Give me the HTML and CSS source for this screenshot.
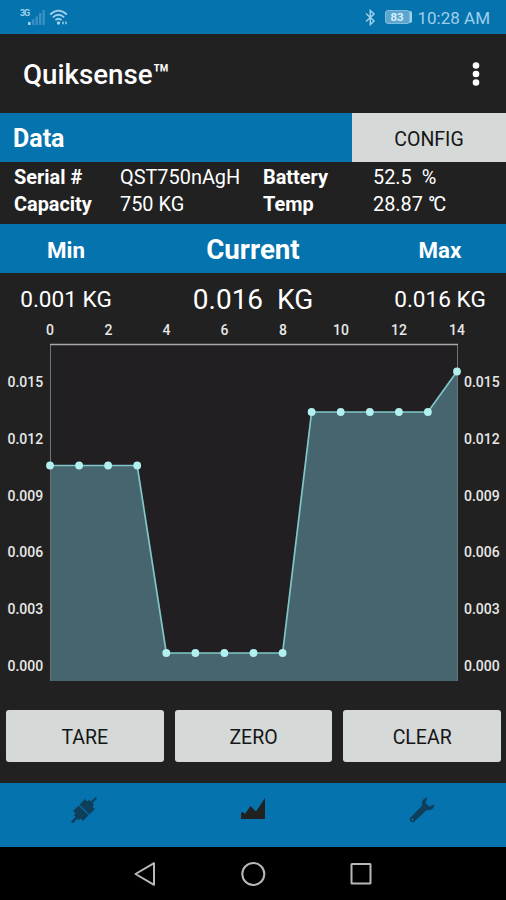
FILE: index.html
```html
<!DOCTYPE html>
<html lang="en">
<head>
    <meta charset="UTF-8">
    <meta name="viewport" content="width=device-width, initial-scale=1.0">
    <title>Quiksense</title>
    <link rel="stylesheet" href="styles.css">
</head>
<body>
    <div class="phone">
        <!-- Status bar -->
        <div class="status-bar">
            <div class="status-left">
                <span class="network">3G</span>
                <svg class="signal" width="18" height="16" viewBox="0 0 18 16">
                    <rect class="on" x="0" y="13" width="2.6" height="3"/>
                    <rect x="4" y="10.5" width="2.4" height="5.5"/>
                    <rect x="7.5" y="7.5" width="2.4" height="8.5"/>
                    <rect x="11" y="4" width="2.4" height="12"/>
                    <rect x="14.5" y="1" width="2.4" height="15"/>
                </svg>
                <svg class="wifi" width="20" height="17" viewBox="0 0 20 17">
                    <path d="M1.2 5.5Q9.5 -2.2 17.8 5.5"/>
                    <path d="M3.8 8.4Q9.5 3.2 15.2 8.4"/>
                    <path d="M6.4 11.2Q9.5 8.4 12.6 11.2"/>
                    <circle cx="9.5" cy="14" r="1.7"/>
                    <path class="thin" d="M14 12.5v2.8M17 12.5v2.8"/>
                </svg>
            </div>
            <div class="status-right">
                <svg class="bluetooth" width="11" height="17" viewBox="0 0 11 17">
                    <path d="M1 4.5L9 12L5.3 15.5V1.5L9 5L1 12.5"/>
                </svg>
                <div class="battery"><span>83</span></div>
                <span class="clock">10:28 AM</span>
            </div>
        </div>

        <div class="app-bar">
            <h1 class="title">Quiksense™</h1>
            <svg class="more" width="10" height="26" viewBox="0 0 10 26">
                <circle cx="5" cy="4.5" r="3.3"/>
                <circle cx="5" cy="13" r="3.3"/>
                <circle cx="5" cy="21.5" r="3.3"/>
            </svg>
        </div>

        <!-- Device data -->
        <div class="data-bar">
            <h2 class="data-title">Data</h2>
            <button class="config">CONFIG</button>
        </div>
        <div class="info">
            <span class="label">Serial #</span>
            <span>QST750nAgH</span>
            <span class="label">Battery</span>
            <span>52.5&nbsp; %</span>
            <span class="label">Capacity</span>
            <span>750 KG</span>
            <span class="label">Temp</span>
            <span>28.87 <span class="degree">°</span>C</span>
        </div>

        <!-- Readings -->
        <div class="readings readings-head">
            <span>Min</span>
            <span class="current">Current</span>
            <span>Max</span>
        </div>
        <div class="readings readings-values">
            <span>0.001 KG</span>
            <span class="current">0.016&nbsp; KG</span>
            <span>0.016 KG</span>
        </div>

        <svg class="chart" width="506" height="383" viewBox="0 318 506 383">
            <rect class="plot" x="50" y="344" width="407" height="337"/>
            <path class="area" d="M50 465.5H137.2L166.3 653H282.6L311.6 412H427.9L457 371.5V681H50Z"/>
            <path class="side" d="M50.5 344V681M457.5 344V681"/>
            <path class="top" d="M50 344.5H458"/>
            <path class="line" d="M50 465.5H137.2L166.3 653H282.6L311.6 412H427.9L457 371.5"/>
            <g class="points">
                <circle cx="50" cy="465.5" r="3.9"/>
                <circle cx="79.1" cy="465.5" r="3.9"/>
                <circle cx="108.1" cy="465.5" r="3.9"/>
                <circle cx="137.2" cy="465.5" r="3.9"/>
                <circle cx="166.3" cy="653" r="3.9"/>
                <circle cx="195.4" cy="653" r="3.9"/>
                <circle cx="224.4" cy="653" r="3.9"/>
                <circle cx="253.5" cy="653" r="3.9"/>
                <circle cx="282.6" cy="653" r="3.9"/>
                <circle cx="311.6" cy="412" r="3.9"/>
                <circle cx="340.7" cy="412" r="3.9"/>
                <circle cx="369.8" cy="412" r="3.9"/>
                <circle cx="398.9" cy="412" r="3.9"/>
                <circle cx="427.9" cy="412" r="3.9"/>
                <circle cx="457" cy="371.5" r="3.9"/>
            </g>
            <g class="axis-x">
                <text x="50" y="335">0</text>
                <text x="108.5" y="335">2</text>
                <text x="166.5" y="335">4</text>
                <text x="224.5" y="335">6</text>
                <text x="283" y="335">8</text>
                <text x="341" y="335">10</text>
                <text x="399" y="335">12</text>
                <text x="457" y="335">14</text>
            </g>
            <g class="axis-y">
                <text x="7.5" y="386.5">0.015</text>
                <text x="7.5" y="443.5">0.012</text>
                <text x="7.5" y="500.5">0.009</text>
                <text x="7.5" y="557">0.006</text>
                <text x="7.5" y="613.5">0.003</text>
                <text x="7.5" y="670.5">0.000</text>
                <text x="464" y="386.5">0.015</text>
                <text x="464" y="443.5">0.012</text>
                <text x="464" y="500.5">0.009</text>
                <text x="464" y="557">0.006</text>
                <text x="464" y="613.5">0.003</text>
                <text x="464" y="670.5">0.000</text>
            </g>
        </svg>

        <div class="actions">
            <button>TARE</button>
            <button>ZERO</button>
            <button>CLEAR</button>
        </div>

        <!-- Tabs -->
        <div class="tabs">
            <div class="tab">
                <svg width="26" height="26" viewBox="0 0 26 26">
                    <g transform="rotate(-45 13 13)">
                        <path d="M-4.5 12H2V9.5H4.5V6H12.4V20H4.5V16.5H2V14.5H-4.5Z"/>
                        <path d="M13.6 6H21.5V9.5H24V12H30.5V14H24V16.5H21.5V20H13.6Z"/>
                    </g>
                </svg>
            </div>
            <div class="tab active">
                <svg width="26" height="26" viewBox="0 0 26 26">
                    <path d="M1 22V16L3 15L5 17L10.5 9L16 14.5L25 1V22Z"/>
                </svg>
            </div>
            <div class="tab">
                <svg width="26" height="26" viewBox="0 0 26 26">
                    <path fill-rule="evenodd" d="M18.4 .6L16.6 5.8L20.2 9.4L25.3 7.6C25.6 10.6 22.4 14.2 17.8 12.9L5.2 24.7C2.6 26.8 -.8 23.4 1.3 20.8L13 8.8C11.9 4.5 14.8 .7 18.4 .6ZM3.5 21.6A1 1 0 1 0 3.5 23.6A1 1 0 1 0 3.5 21.6Z"/>
                </svg>
            </div>
        </div>

        <!-- System navigation -->
        <div class="nav-bar">
            <svg width="26" height="28" viewBox="0 0 26 28">
                <path d="M3.5 14L22 3.2V24.8Z"/>
            </svg>
            <svg width="28" height="28" viewBox="0 0 28 28">
                <circle cx="14.3" cy="14" r="11"/>
            </svg>
            <svg width="26" height="28" viewBox="0 0 26 28">
                <rect x="3.5" y="4" width="19" height="19.5" rx=".5"/>
            </svg>
        </div>
    </div>
</body>
</html>
```

FILE: styles.css
```css
* {
    box-sizing: border-box;
}

body {
    margin: 0;
    background-color: #212121;
    color: #fff;
    font-family: Roboto, "Noto Sans", sans-serif;
}

.phone {
    width: 506px;
    height: 900px;
    display: flex;
    flex-direction: column;
    overflow: hidden;
    background-color: #212121;
}

h1, h2 {
    margin: 0;
}

button {
    border: none;
    padding: 2px 0 0;
    background-color: #d5d9d8;
    color: #161616;
    font-family: inherit;
    font-size: 19.5px;
}

/* Status bar */
.status-bar {
    height: 34px;
    flex: none;
    display: flex;
    justify-content: space-between;
    padding: 0 16px 0 20px;
    background-color: #0573ae;
    color: #9fd0ea;
}

.status-left,
.status-right {
    display: flex;
    align-items: center;
}

.network {
    width: 8px;
    align-self: flex-start;
    margin-top: 8px;
    font-size: 9px;
    font-weight: 700;
    line-height: 10px;
    letter-spacing: -1.2px;
}

.signal {
    fill: #3791c4;
}

.signal .on {
    fill: #9fd0ea;
}

.wifi {
    margin-left: 3px;
    fill: #9fd0ea;
}

.wifi path {
    fill: none;
    stroke: #9fd0ea;
    stroke-width: 1.8;
}

.wifi .thin {
    stroke-width: 1.4;
}

.bluetooth {
    fill: none;
    stroke: #9fd0ea;
    stroke-width: 1.5;
}

.battery {
    width: 25px;
    height: 14px;
    margin: 0 8px 0 9px;
    border: 1px solid #7fbbdc;
    border-radius: 3px;
    background-color: #5ba6d0;
    box-shadow: 3px 0 0 -1px #9fd0ea;
    color: #d7effb;
    font-size: 11.5px;
    font-weight: 700;
    line-height: 12px;
    text-align: center;
}

.clock {
    padding-top: 2px;
    font-size: 17px;
}

/* App bar */
.app-bar {
    height: 79px;
    flex: none;
    display: flex;
    align-items: center;
    justify-content: space-between;
    padding: 0 25px 0 23px;
}

.title {
    padding-top: 2px;
    font-size: 27.7px;
    font-weight: 500;
    line-height: 32px;
}

.more {
    fill: #fff;
}

/* Device data */
.data-bar {
    height: 49px;
    flex: none;
    display: flex;
    background-color: #0573ae;
}

.data-title {
    flex: 1;
    padding: 1px 0 0 13px;
    font-size: 25px;
    font-weight: 700;
    line-height: 49px;
}

.config {
    width: 154px;
    padding-top: 3px;
}

.info {
    height: 62px;
    flex: none;
    display: grid;
    grid-template-columns: 106px 143px 110px 1fr;
    grid-auto-rows: 27px;
    padding: 2px 0 0 14px;
    font-size: 19.9px;
    line-height: 27px;
    white-space: nowrap;
}

.info .label {
    font-weight: 700;
}

.info .degree {
    letter-spacing: -2px;
}

/* Readings */
.readings {
    flex: none;
    display: grid;
    grid-template-columns: 132px 1fr 132px;
    align-items: center;
    text-align: center;
    white-space: nowrap;
}

.readings-head {
    height: 49px;
    padding-top: 2px;
    background-color: #0573ae;
    font-size: 22.3px;
    font-weight: 700;
}

.readings-head .current {
    font-size: 27.7px;
}

.readings-values {
    height: 45px;
    padding-top: 7px;
    font-size: 22.6px;
}

.readings-values .current {
    font-size: 28px;
}

/* Chart */
.chart {
    display: block;
    flex: none;
}

.plot {
    fill: #221f22;
}

.area {
    fill: #47656f;
}

.side {
    fill: none;
    stroke: #6f7476;
}

.top {
    fill: none;
    stroke: #a8a8a8;
    stroke-width: 1.5;
}

.line {
    fill: none;
    stroke: #80c7c8;
    stroke-width: 1.7;
}

.points {
    fill: #b2f0ef;
}

.axis-x,
.axis-y {
    fill: #e8e8e8;
    font-size: 14px;
    font-weight: 500;
}

.axis-x {
    text-anchor: middle;
}

/* Actions */
.actions {
    flex: none;
    display: flex;
    gap: 11px;
    height: 82px;
    padding: 9px 5px 21px 6px;
}

.actions button {
    flex: 1;
    border-radius: 3px;
}

/* Tabs */
.tabs {
    height: 64px;
    flex: none;
    display: flex;
    background-color: #0573ae;
}

.tab {
    flex: 1;
    display: flex;
    justify-content: center;
    padding-top: 14px;
    fill: #103f5c;
}

.tab.active {
    fill: #212121;
}

/* System navigation */
.nav-bar {
    flex: 1;
    display: flex;
    justify-content: center;
    gap: 81px;
    padding-top: 13px;
    background-color: #000;
    fill: none;
    stroke: #b8b8b8;
    stroke-width: 2;
    stroke-linejoin: round;
}
```
